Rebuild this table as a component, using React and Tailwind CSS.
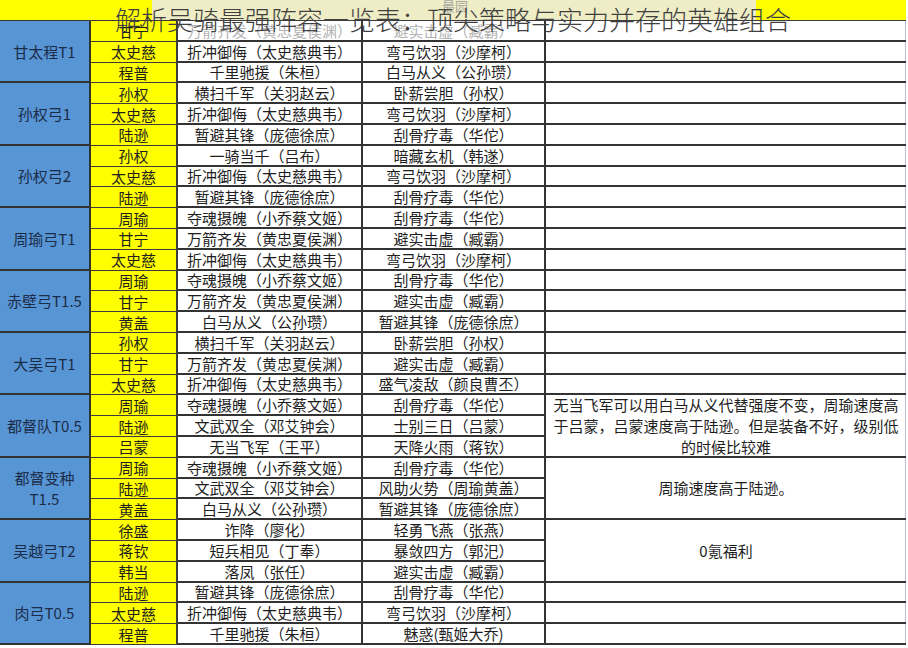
import React from 'react';

const groups = [
  {
    name: ['甘太程T1'],
    rows: [
      ['甘宁', '万箭齐发（黄忠夏侯渊）', '避实击虚（臧霸）'],
      ['太史慈', '折冲御侮（太史慈典韦）', '弯弓饮羽（沙摩柯）'],
      ['程普', '千里驰援（朱桓）', '白马从义（公孙瓒）'],
    ],
  },
  {
    name: ['孙权弓1'],
    rows: [
      ['孙权', '横扫千军（关羽赵云）', '卧薪尝胆（孙权）'],
      ['太史慈', '折冲御侮（太史慈典韦）', '弯弓饮羽（沙摩柯）'],
      ['陆逊', '暂避其锋（庞德徐庶）', '刮骨疗毒（华佗）'],
    ],
  },
  {
    name: ['孙权弓2'],
    rows: [
      ['孙权', '一骑当千（吕布）', '暗藏玄机（韩遂）'],
      ['太史慈', '折冲御侮（太史慈典韦）', '弯弓饮羽（沙摩柯）'],
      ['陆逊', '暂避其锋（庞德徐庶）', '刮骨疗毒（华佗）'],
    ],
  },
  {
    name: ['周瑜弓T1'],
    rows: [
      ['周瑜', '夺魂摄魄（小乔蔡文姬）', '刮骨疗毒（华佗）'],
      ['甘宁', '万箭齐发（黄忠夏侯渊）', '避实击虚（臧霸）'],
      ['太史慈', '折冲御侮（太史慈典韦）', '弯弓饮羽（沙摩柯）'],
    ],
  },
  {
    name: ['赤壁弓T1.5'],
    rows: [
      ['周瑜', '夺魂摄魄（小乔蔡文姬）', '刮骨疗毒（华佗）'],
      ['甘宁', '万箭齐发（黄忠夏侯渊）', '避实击虚（臧霸）'],
      ['黄盖', '白马从义（公孙瓒）', '暂避其锋（庞德徐庶）'],
    ],
  },
  {
    name: ['大吴弓T1'],
    rows: [
      ['孙权', '横扫千军（关羽赵云）', '卧薪尝胆（孙权）'],
      ['甘宁', '万箭齐发（黄忠夏侯渊）', '避实击虚（臧霸）'],
      ['太史慈', '折冲御侮（太史慈典韦）', '盛气凌敌（颜良曹丕）'],
    ],
  },
  {
    name: ['都督队T0.5'],
    rows: [
      ['周瑜', '夺魂摄魄（小乔蔡文姬）', '刮骨疗毒（华佗）'],
      ['陆逊', '文武双全（邓艾钟会）', '士别三日（吕蒙）'],
      ['吕蒙', '无当飞军（王平）', '天降火雨（蒋钦）'],
    ],
    note: '无当飞军可以用白马从义代替强度不变，周瑜速度高于吕蒙，吕蒙速度高于陆逊。但是装备不好，级别低的时候比较难',
  },
  {
    name: ['都督变种', 'T1.5'],
    rows: [
      ['周瑜', '夺魂摄魄（小乔蔡文姬）', '刮骨疗毒（华佗）'],
      ['陆逊', '文武双全（邓艾钟会）', '风助火势（周瑜黄盖）'],
      ['黄盖', '白马从义（公孙瓒）', '暂避其锋（庞德徐庶）'],
    ],
    note: '周瑜速度高于陆逊。',
  },
  {
    name: ['吴越弓T2'],
    rows: [
      ['徐盛', '诈降（廖化）', '轻勇飞燕（张燕）'],
      ['蒋钦', '短兵相见（丁奉）', '暴敛四方（郭汜）'],
      ['韩当', '落凤（张任）', '避实击虚（臧霸）'],
    ],
    note: '0氪福利',
  },
  {
    name: ['肉弓T0.5'],
    rows: [
      ['陆逊', '暂避其锋（庞德徐庶）', '刮骨疗毒（华佗）'],
      ['太史慈', '折冲御侮（太史慈典韦）', '弯弓饮羽（沙摩柯）'],
      ['程普', '千里驰援（朱桓）', '魅惑(甄姬大乔)'],
    ],
  },
];

const font = { fontFamily: '"Noto Sans CJK SC", "Noto Sans", sans-serif' };

export default function App() {
  return (
    <div className="relative w-[908px] h-[648px] bg-white overflow-hidden text-[#1e1e1e]" style={font}>
      {/* header band */}
      <div className="flex h-[21px] w-[906px] border-b border-[#3a3a3a]">
        <div className="w-[152px] bg-[#ffff00]"></div>
        <div className="flex-1 bg-[#eeedc6] relative">
          <span className="absolute left-[290px] -top-[4px] text-[13px] text-[#a9a9a0]">最园</span>
        </div>
        <div className="w-[150px] bg-[#ffff00]"></div>
      </div>

      {/* table */}
      <div className="grid w-[906px] grid-cols-[91px_87px_185px_183px_360px] grid-rows-[repeat(30,20.8px)] text-[15px] leading-none border-r border-[#b8c2d0]">
        {groups.map((g, gi) => (
          <React.Fragment key={gi}>
            <div className="col-start-1 row-span-3 bg-[#5895d5] border-r-2 border-b-2 border-[#333] flex flex-col items-center justify-center gap-[6px] text-[#1b2c48]">
              {g.name.map((n) => (
                <span key={n}>{n}</span>
              ))}
            </div>
            {g.rows.map((r, ri) => {
              const faded = gi === 0 && ri === 0;
              return (
                <React.Fragment key={ri}>
                  <div className="col-start-2 bg-[#ffff00] border-r-2 border-b border-[#3d3d3d] flex items-center justify-center">
                    {r[0]}
                  </div>
                  <div className={`col-start-3 border-r-2 border-b-2 border-[#333] flex items-center justify-center ${faded ? 'text-[#b4b4b4]' : ''}`}>
                    {r[1]}
                  </div>
                  <div className={`col-start-4 border-r-2 border-b-2 border-[#333] flex items-center justify-center ${faded ? 'text-[#b4b4b4]' : ''}`}>
                    {r[2]}
                  </div>
                  {g.note ? (
                    ri === 0 && (
                      <div className="col-start-5 row-span-3 border-b-2 border-[#333] flex items-center justify-center px-[4px] text-center text-[15px] leading-[21px]">
                        {g.note}
                      </div>
                    )
                  ) : (
                    <div className="col-start-5 border-b-2 border-[#333]"></div>
                  )}
                </React.Fragment>
              );
            })}
          </React.Fragment>
        ))}
      </div>

      {/* title overlay */}
      <h1 className="absolute left-[115px] top-[6px] text-[26px] leading-none font-light text-[#404040] whitespace-nowrap">
        解析吴骑最强阵容一览表：顶尖策略与实力并存的英雄组合
      </h1>
    </div>
  );
}
